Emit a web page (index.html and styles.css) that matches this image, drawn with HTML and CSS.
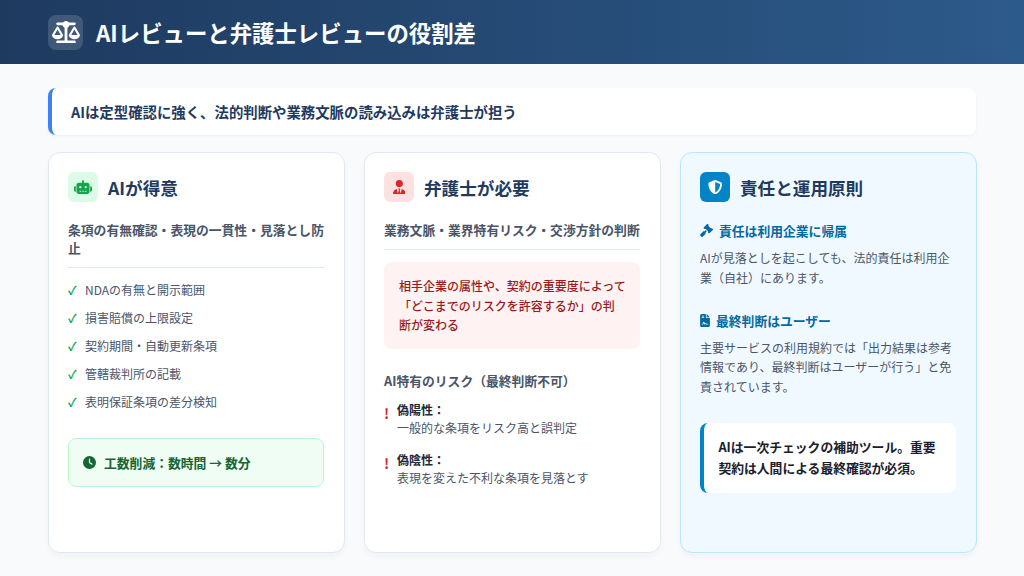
FILE: index.html
```html
<!DOCTYPE html>
<html lang="ja">
<head>
    <meta charset="UTF-8">
    <meta name="viewport" content="width=device-width, initial-scale=1.0">
    <title>AIレビューと弁護士レビューの役割差</title>
    <link rel="stylesheet" href="styles.css">
</head>
<body>

    <header class="header">
        <div class="header-icon">
            <svg class="icon-scale" viewBox="0 0 640 512"><path d="M384 32H512c17.7 0 32 14.3 32 32s-14.3 32-32 32H398.4c-5.2 25.8-22.9 47.1-46.4 57.3V448H512c17.7 0 32 14.3 32 32s-14.3 32-32 32H320 128c-17.7 0-32-14.3-32-32s14.3-32 32-32H288V153.3c-23.5-10.3-41.2-31.6-46.4-57.3H128c-17.7 0-32-14.3-32-32s14.3-32 32-32H256c14.6-19.4 37.8-32 64-32s49.4 12.6 64 32zm55.6 288H584.4L512 195.8 439.6 320zM512 416c-62.9 0-115.2-34-126-78.9c-2.6-11 1-22.3 6.7-32.1l95.2-163.2c5-8.6 14.2-13.8 24.1-13.8s19.1 5.3 24.1 13.8l95.2 163.2c5.7 9.8 9.3 21.1 6.7 32.1C627.2 382 574.9 416 512 416zM126.8 195.8L54.4 320H199.3L126.8 195.8zM.9 337.1c-2.6-11 1-22.3 6.7-32.1l95.2-163.2c5-8.6 14.2-13.8 24.1-13.8s19.1 5.3 24.1 13.8l95.2 163.2c5.7 9.8 9.3 21.1 6.7 32.1C242 382 189.7 416 126.8 416S11.7 382 .9 337.1z"/></svg>
        </div>
        <h1>AIレビューと弁護士レビューの役割差</h1>
    </header>

    <main class="content">
        <div class="summary">AIは定型確認に強く、法的判断や業務文脈の読み込みは弁護士が担う</div>

        <div class="columns">
            <!-- AI -->
            <section class="card">
                <div class="card-head">
                    <div class="card-icon icon-green">
                        <svg class="icon-robot" viewBox="0 0 640 512"><path d="M320 0c17.7 0 32 14.3 32 32V96H472c44.2 0 80 35.8 80 80V416c0 44.2-35.8 80-80 80H168c-44.2 0-80-35.8-80-80V176c0-44.2 35.8-80 80-80H288V32c0-17.7 14.3-32 32-32zM208 384c-8.8 0-16 7.2-16 16s7.2 16 16 16h32c8.8 0 16-7.2 16-16s-7.2-16-16-16H208zm96 0c-8.8 0-16 7.2-16 16s7.2 16 16 16h32c8.8 0 16-7.2 16-16s-7.2-16-16-16H304zm96 0c-8.8 0-16 7.2-16 16s7.2 16 16 16h32c8.8 0 16-7.2 16-16s-7.2-16-16-16H400zM264 256a40 40 0 1 0 -80 0 40 40 0 1 0 80 0zm152 40a40 40 0 1 0 0-80 40 40 0 1 0 0 80zM48 224H64V416H48c-26.5 0-48-21.5-48-48V272c0-26.5 21.5-48 48-48zm544 0c26.5 0 48 21.5 48 48v96c0 26.5-21.5 48-48 48H576V224h16z"/></svg>
                    </div>
                    <h2>AIが得意</h2>
                </div>
                <p class="card-sub">条項の有無確認・表現の一貫性・見落とし防止</p>
                <ul class="check-list">
                    <li>NDAの有無と開示範囲</li>
                    <li>損害賠償の上限設定</li>
                    <li>契約期間・自動更新条項</li>
                    <li>管轄裁判所の記載</li>
                    <li>表明保証条項の差分検知</li>
                </ul>
                <div class="saving">
                    <svg class="icon-clock" viewBox="0 0 512 512"><path d="M256 0a256 256 0 1 1 0 512A256 256 0 1 1 256 0zM232 120V256c0 8 4 15.5 10.7 20l96 64c11 7.4 25.9 4.4 33.3-6.7s4.4-25.9-6.7-33.3L280 243.2V120c0-13.3-10.7-24-24-24s-24 10.7-24 24z"/></svg>
                    <span>工数削減：数時間 → 数分</span>
                </div>
            </section>

            <!-- 弁護士 -->
            <section class="card">
                <div class="card-head">
                    <div class="card-icon icon-red">
                        <svg class="icon-user" viewBox="0 0 448 512"><path d="M96 128a128 128 0 1 0 256 0A128 128 0 1 0 96 128zm94.5 200.2l18.6 31L175.8 483.1l-36-146.9c-2-8.1-9.8-13.4-17.9-11.3C51.9 342.4 0 405.8 0 481.3c0 17 13.8 30.7 30.7 30.7H162.5c0 0 0 0 .1 0H168 280h5.5c0 0 0 0 .1 0H417.3c17 0 30.7-13.8 30.7-30.7c0-75.5-51.9-138.9-121.9-156.4c-8.1-2-15.9 3.3-17.9 11.3l-36 146.9L238.9 359.2l18.6-31c6.4-10.7-1.3-24.2-13.7-24.2H224 204.3c-12.4 0-20.1 13.6-13.7 24.2z"/></svg>
                    </div>
                    <h2>弁護士が必要</h2>
                </div>
                <p class="card-sub">業務文脈・業界特有リスク・交渉方針の判断</p>
                <div class="notice">相手企業の属性や、契約の重要度によって<br>「どこまでのリスクを許容するか」の判<br>断が変わる</div>
                <h3 class="risk-title">AI特有のリスク（最終判断不可）</h3>
                <div class="risk">
                    <span class="risk-mark">!</span>
                    <div>
                        <strong>偽陽性：</strong>
                        <p>一般的な条項をリスク高と誤判定</p>
                    </div>
                </div>
                <div class="risk">
                    <span class="risk-mark">!</span>
                    <div>
                        <strong>偽陰性：</strong>
                        <p>表現を変えた不利な条項を見落とす</p>
                    </div>
                </div>
            </section>

            <!-- 責任 -->
            <section class="card card-blue">
                <div class="card-head">
                    <div class="card-icon icon-blue">
                        <svg class="icon-shield" viewBox="0 0 512 512"><path d="M256 0c4.6 0 9.2 1 13.4 2.9L457.7 82.8c22 9.3 38.4 31 38.3 57.2c-.5 99.2-41.3 280.7-213.6 363.2c-16.7 8-36.1 8-52.8 0C57.3 420.7 16.5 239.2 16 140c-.1-26.2 16.3-47.9 38.3-57.2L242.7 2.9C246.8 1 251.4 0 256 0zm0 66.8V444.8C394 378 431.1 230.1 432 141.4L256 66.8l0 0z"/></svg>
                    </div>
                    <h2>責任と運用原則</h2>
                </div>
                <div class="rule">
                    <h3>
                        <svg class="icon-gavel" viewBox="0 0 512 512"><path d="M318.6 9.4c-12.5-12.5-32.8-12.5-45.3 0l-120 120c-12.5 12.5-12.5 32.8 0 45.3l16 16c12.5 12.5 32.8 12.5 45.3 0l4-4L325.4 293.4l-4 4c-12.5 12.5-12.5 32.8 0 45.3l16 16c12.5 12.5 32.8 12.5 45.3 0l120-120c12.5-12.5 12.5-32.8 0-45.3l-16-16c-12.5-12.5-32.8-12.5-45.3 0l-4 4L330.6 74.6l4-4c12.5-12.5 12.5-32.8 0-45.3l-16-16zm-152 288c-12.5-12.5-32.8-12.5-45.3 0l-112 112c-12.5 12.5-12.5 32.8 0 45.3l48 48c12.5 12.5 32.8 12.5 45.3 0l112-112c12.5-12.5 12.5-32.8 0-45.3l-1.4-1.4L272 285.3 226.7 240 168 298.7l-1.4-1.4z"/></svg>
                        責任は利用企業に帰属
                    </h3>
                    <p>AIが見落としを起こしても、法的責任は利用企業（自社）にあります。</p>
                </div>
                <div class="rule">
                    <h3>
                        <svg class="icon-file" viewBox="0 0 384 512"><path d="M64 0C28.7 0 0 28.7 0 64V448c0 35.3 28.7 64 64 64H320c35.3 0 64-28.7 64-64V160H256c-17.7 0-32-14.3-32-32V0H64zM256 0V128H384L256 0zM80 64h64c8.8 0 16 7.2 16 16s-7.2 16-16 16H80c-8.8 0-16-7.2-16-16s7.2-16 16-16zm0 64h64c8.8 0 16 7.2 16 16s-7.2 16-16 16H80c-8.8 0-16-7.2-16-16s7.2-16 16-16zm54.2 253.8c-6.1 20.3-24.8 34.2-46 34.2H80c-8.8 0-16-7.2-16-16s7.2-16 16-16h8.2c7.1 0 13.3-4.6 15.3-11.4l14.9-49.5c3.4-11.3 13.8-19.1 25.6-19.1s22.2 7.7 25.6 19.1l11.6 38.6c7.4-6.2 16.8-9.7 26.8-9.7c15.9 0 30.4 9 37.5 23.2l4.4 8.8H304c8.8 0 16 7.2 16 16s-7.2 16-16 16H240c-6.1 0-11.6-3.4-14.3-8.8l-8.8-17.7c-1.7-3.4-5.1-5.5-8.8-5.5s-7.2 2.1-8.8 5.5l-8.8 17.7c-2.9 5.9-9.2 9.4-15.7 8.8s-12.1-5.1-13.9-11.3L144 349l-9.8 32.8z"/></svg>
                        最終判断はユーザー
                    </h3>
                    <p>主要サービスの利用規約では「出力結果は参考情報であり、最終判断はユーザーが行う」と免責されています。</p>
                </div>
                <div class="callout">AIは一次チェックの補助ツール。重要契約は人間による最終確認が必須。</div>
            </section>
        </div>
    </main>

</body>
</html>
```
FILE: styles.css
```css
* {
    margin: 0;
    padding: 0;
    box-sizing: border-box;
}

body {
    width: 1024px;
    height: 576px;
    overflow: hidden;
    font-family: "Noto Sans CJK JP", "Noto Sans", sans-serif;
    background-color: #f8fafc;
    color: #4a5568;
}

/* Header */
.header {
    display: flex;
    align-items: center;
    gap: 13px;
    height: 64px;
    padding: 0 48px;
    background: linear-gradient(90deg, #1e3a5f 0%, #2c5a8a 100%);
    color: white;
}

.header-icon {
    display: flex;
    align-items: center;
    justify-content: center;
    width: 35px;
    height: 35px;
    border-radius: 8px;
    background-color: rgba(255, 255, 255, 0.15);
}

.icon-scale {
    width: 28px;
    height: 22.4px;
    fill: white;
}

.header h1 {
    font-size: 22.4px;
    font-weight: 700;
}

/* Content */
.content {
    padding: 24px 48px;
}

.summary {
    height: 47px;
    display: flex;
    align-items: center;
    padding-left: 19px;
    font-size: 14.4px;
    font-weight: 700;
    color: #1e3a5f;
    background-color: white;
    border-left: 4px solid #3b82f6;
    border-radius: 8px;
    box-shadow: 0 1px 3px rgba(0, 0, 0, 0.05);
    margin-bottom: 17px;
}

.columns {
    display: grid;
    grid-template-columns: repeat(3, 297px);
    gap: 19px;
    height: 401px;
}

.card {
    padding: 19px 20px 19px 19px;
    background-color: white;
    border: 1px solid #e2e8f0;
    border-radius: 12px;
    box-shadow: 0 4px 6px rgba(0, 0, 0, 0.03);
}

.card-blue {
    background-color: #f0f9ff;
    border-color: #bae6fd;
}

.card-head {
    display: flex;
    align-items: center;
    gap: 10px;
    margin-bottom: 19px;
}

.card-head h2 {
    font-size: 17.6px;
    font-weight: 700;
    color: #1e3a5f;
}

.card-icon {
    display: flex;
    align-items: center;
    justify-content: center;
    width: 30px;
    height: 30px;
    border-radius: 6px;
}

.icon-green { background-color: #dcfce7; fill: #16a34a; }
.icon-red { background-color: #fee2e2; fill: #dc2626; }
.icon-blue { background-color: #0284c7; fill: white; }

.icon-robot { width: 18px; height: 14.4px; }
.icon-user { width: 12.6px; height: 14.4px; }
.icon-shield { width: 14.4px; height: 14.4px; }

.card-sub {
    font-size: 12.8px;
    font-weight: 700;
    line-height: 1.4;
    color: #4a5568;
    padding-bottom: 10px;
    border-bottom: 1px solid #e2e8f0;
    margin-bottom: 12px;
}

/* Check list */
.check-list {
    list-style: none;
    margin-bottom: 26px;
}

.check-list li {
    display: flex;
    gap: 8px;
    font-size: 12px;
    line-height: 20px;
    margin-bottom: 8px;
}

.check-list li::before {
    content: "✓";
    width: 9px;
    font-size: 12px;
    font-weight: 700;
    color: #16a34a;
}

.saving {
    display: flex;
    align-items: center;
    gap: 8px;
    height: 49px;
    padding: 0 14px;
    font-size: 12.8px;
    font-weight: 700;
    color: #166534;
    background-color: #f0fdf4;
    border: 1px solid #bbf7d0;
    border-radius: 8px;
}

.icon-clock {
    width: 13px;
    height: 13px;
    fill: #166534;
}

/* Lawyer card */
.notice {
    padding: 14.4px 10px 14.4px 15px;
    font-size: 12px;
    line-height: 1.62;
    font-weight: 500;
    color: #991b1b;
    background-color: #fef2f2;
    border-radius: 8px;
    margin-bottom: 22px;
}

.risk-title {
    font-size: 12.8px;
    font-weight: 700;
    color: #4a5568;
    margin-bottom: 11px;
}

.risk {
    display: flex;
    gap: 8px;
    font-size: 12px;
    line-height: 18px;
    margin-bottom: 14px;
}

.risk-mark {
    width: 5px;
    font-size: 14px;
    font-weight: 700;
    line-height: 24px;
    color: #dc2626;
}

.risk strong {
    color: #1f2937;
}

/* Responsibility card */
.rule {
    margin-bottom: 23px;
}

.rule h3 {
    display: flex;
    align-items: center;
    gap: 6px;
    font-size: 12.8px;
    font-weight: 700;
    color: #0369a1;
    margin-bottom: 8px;
}

.rule h3 svg {
    height: 13px;
    width: 13px;
    fill: #0369a1;
}

.rule h3 .icon-file {
    width: 10px;
}

.rule p {
    font-size: 12px;
    line-height: 1.65;
    color: #4a5568;
}

.callout {
    margin-top: 26px;
    padding: 14.4px;
    font-size: 12.8px;
    line-height: 20.5px;
    font-weight: 700;
    color: #1a202c;
    background-color: white;
    border-left: 4px solid #0284c7;
    border-radius: 8px;
}
```
